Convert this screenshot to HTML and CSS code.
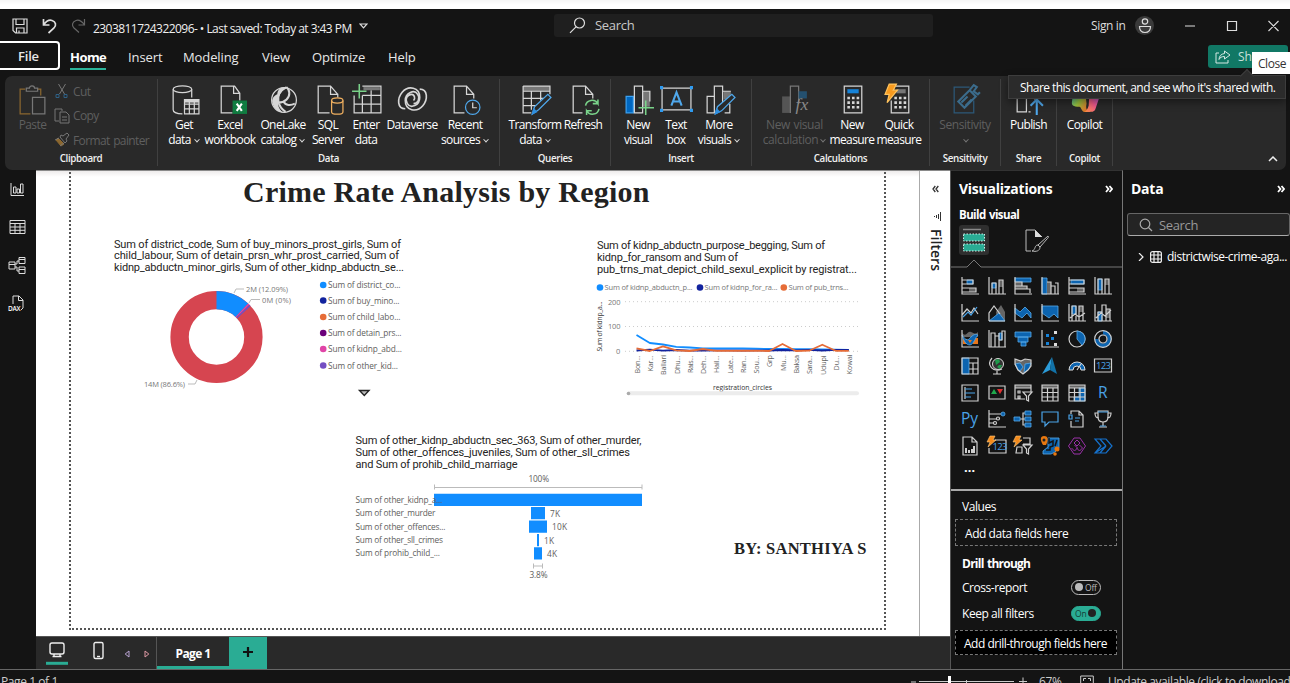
FILE: index.html
```html
<!DOCTYPE html>
<html lang="en">
<head>
<meta charset="utf-8">
<title>Power BI Desktop</title>
<link rel="stylesheet" href="styles.css">
</head>
<body>
<div class="strip"></div>
<header class="titlebar">
  <svg class="tb-save" width="16" height="16" viewBox="0 0 16 16"><path d="M1 1h14v14H3.500L1 12.500zM4 1v5.500h8V1M4.500 15v-5h7.500v5M7 12.500V15"/></svg>
  <svg class="tb-undo" width="15" height="16" viewBox="0 0 15 16"><path d="M1.500 1v6h6M1.500 7C4 3.500 7 1.500 10 2.500c4 1.300 4.500 5 2 7.500L6.500 15"/></svg>
  <svg class="tb-redo" width="15" height="16" viewBox="0 0 15 16"><path d="M13.500 1v6h-6M13.500 7C11 3.500 8 1.500 5 2.500c-4 1.300-4.500 5-2 7.500L8 14.500"/></svg>
  <span class="docname">2303811724322096- • Last saved: Today at 3:43 PM</span>
  <svg class="tb-tri" width="9" height="6" viewBox="0 0 9 6"><path d="M1 1h7L4.500 4.800z"/></svg>
  <div class="searchbox">
    <svg width="17" height="17" viewBox="0 0 17 17"><circle cx="10.500" cy="6" r="5"/><path d="M7 9.800L1 15.800"/></svg>
    <span>Search</span>
  </div>
  <span class="signin">Sign in</span>
  <span class="avatar"><svg width="14" height="16" viewBox="0 0 14 16"><circle cx="7" cy="3.500" r="2.700"/><path d="M1.500 8.500h11c0 4-2 6-5.500 6s-5.500-2-5.500-6z"/></svg></span>
  <svg class="winbtns" width="94" height="12" viewBox="0 0 94 12"><path d="M1 6h10M43.500 1.500h9v9h-9zM84.500 1l10 10M94.500 1l-10 10"/></svg>
</header>
<nav class="tabs">
  <span class="file">File</span>
  <span class="tab t-home">Home</span>
  <span class="tab t-insert">Insert</span>
  <span class="tab t-model">Modeling</span>
  <span class="tab t-view">View</span>
  <span class="tab t-opt">Optimize</span>
  <span class="tab t-help">Help</span>
  <span class="share"><svg width="16" height="14" viewBox="0 0 16 14"><path d="M4 3H1v10h12v-3M9.500 1l5.500 4-5.500 4V6.500C6.500 6.500 5 7.500 4 9.500 4.200 6 6 4 9.500 3.500z"/></svg><b>Share</b></span>
</nav>

<section class="ribbon">
  <div class="group g-clip">
    <div class="buttons">
      <div class="btn dim w-paste"><svg class="ic" viewBox="0 0 32 32"><path class="or2" d="M9 6H4v24h10M21 6h3v6"/><path class="g" d="M10 8V5h3c0-3 5-3 5 0h3v3zM16 14h12v16H16z"/></svg><span>Paste</span></div>
      <div class="clipcol">
        <div class="cliprow"><svg width="16" height="16" viewBox="0 0 16 16"><path class="g" d="M4.500 1l6 10M11.500 1l-6 10"/><path class="bl2" d="M2 11.500h3v3H2zM10 11.500h3v3h-3z"/></svg><span>Cut</span></div>
        <div class="cliprow"><svg width="16" height="16" viewBox="0 0 16 16"><path class="g" d="M5 13H1V1h7v2M6 4h6l3 3v8H6zM8 9h5M8 12h5"/></svg><span>Copy</span></div>
        <div class="cliprow"><svg width="16" height="16" viewBox="0 0 16 16"><path class="or2 ff" d="M2 8l5 6 3-2-6-6z"/><path class="g" d="M6 5l5 6 2-2-1-2 3-4-2-2-4 3-2-1zM1 8l4-2M6 14l4-3"/></svg><span>Format painter</span></div>
      </div>
    </div>
    <div class="glabel">Clipboard</div>
  </div>
  <div class="group g-data">
    <div class="buttons">
      <div class="btn w44"><svg class="ic" viewBox="0 0 32 32"><ellipse class="w" cx="14" cy="6" rx="9" ry="3.300"/><path class="w" d="M5 6v20c0 2 3 4 9 4M23 6v8"/><path class="w" d="M16 16h14v14H16zM16 20.500h14M16 25h14M20.700 18v12M25.500 18v12"/><path class="wf" d="M16 16h14v3H16z"/></svg><span>Get<br>data<i></i></span></div>
      <div class="btn w48"><svg class="ic" viewBox="0 0 32 32"><path class="w" d="M18 29H7V3h13l5 7v7M19 3v7h6"/><path fill="#107c41" d="M18 17h14v13H18z"/><path d="M22 20l5 7M27 20l-5 7" stroke="#fff" stroke-width="2"/></svg><span>Excel<br>workbook</span></div>
      <div class="btn w58"><svg class="ic" viewBox="0 0 32 32"><circle class="w" cx="16.500" cy="16.500" r="12"/><path class="wf" d="M19 4c-6-1-9 3-9 7-3 1-5 4-5 7 1 7 6 10 11 11-4-3-6-7-5-11 0-6 2-9 8-14z"/><path class="w" stroke-width="2" d="M19 4c-6 3-9 8-8 14 1 5 4 8 7 10M19 4c3 3 4 8 0 12-2 2-5 3-8 3M16 18c2 4 7 4 11 2"/></svg><span>OneLake<br>catalog<i></i></span></div>
      <div class="btn w32"><svg class="ic" viewBox="0 0 32 32"><path class="w" d="M17 29H6V3h12l7 8M18 3v8h7v3"/><path class="or" d="M19 17v11c0 3 11 3 11 0V17"/><ellipse class="or" cx="24.500" cy="17" rx="5.500" ry="2.500"/></svg><span>SQL<br>Server</span></div>
      <div class="btn w44"><svg class="ic" viewBox="0 0 32 32"><path class="w" d="M4 12v17h26V3H12M4 20.500h26M12 12v17M20.500 7v22M12 12h18"/><path fill="#777" d="M13 4h16v3H13z"/><path class="gr" d="M9 1v14M2 8h14"/></svg><span>Enter<br>data</span></div>
      <div class="btn w48"><svg class="ic" viewBox="0 0 32 32"><path class="w" stroke-width="1.600" d="M9 25C1 25 1 15 6 9c6-7 17-5 17 5 0 8-9 11-12 6-3-4 0-9 4-9 3 0 4 4 2 6"/><path class="w" stroke-width="1.600" d="M23 6c8 0 8 10 3 16-6 7-17 5-17-5 0-8 9-11 12-6 3 4 0 9-4 9"/></svg><span>Dataverse</span></div>
      <div class="btn w58"><svg class="ic" viewBox="0 0 32 32"><path class="w" d="M15 29H5V3h12l7 8v4M17 3v8h7"/><circle class="bl" cx="23" cy="23.500" r="7"/><path class="w" d="M23 19v5h4"/></svg><span>Recent<br>sources<i></i></span></div>
    </div>
    <div class="glabel">Data</div>
  </div>
  <div class="group g-query">
    <div class="buttons">
      <div class="btn w52"><svg class="ic" viewBox="0 0 32 32"><path fill="#777" d="M4 3h26v5H4z"/><path class="w" d="M4 3h26v8M12 29H4V3M4 8h26M4 15h20M4 22h13M12 8v18M21 8v9"/><path class="bl" d="M13 30l2-7L28 11l3 3-12 12z"/><path fill="#2f8fe0" d="M12 31l2-7 4 4z"/></svg><span>Transform<br>data<i></i></span></div>
      <div class="btn w44"><svg class="ic" viewBox="0 0 32 32"><path class="w" d="M15 29H6V3h12l7 8v4M18 3v8h7"/><path class="gr" d="M18 22c1-6 9-7 12-2v-4M30 20h-5M31 25c-1 6-9 7-12 2v4M19 27h5"/></svg><span>Refresh</span></div>
    </div>
    <div class="glabel">Queries</div>
  </div>
  <div class="group g-insert">
    <div class="buttons">
      <div class="btn w36"><svg class="ic" viewBox="0 0 32 32"><path fill="#0067c0" stroke="#3aa0f0" d="M4 13h7v16H4z"/><path fill="#777" d="M20 8h7v15h-7z"/><path class="w" d="M12 29V3h8v26zM20 8h7v10"/><path class="gr" d="M23 17v14M16 24h15"/></svg><span>New<br>visual</span></div>
      <div class="btn w40"><svg class="ic" viewBox="0 0 32 32"><path class="w" d="M2 5h28v21H2z"/><path fill="#2f9bf0" d="M0 3h3v3H0zM29 3h3v3h-3zM0 25h3v3H0zM29 25h3v3h-3z"/><path class="bl" stroke-width="2" d="M11 22l5-13 5 13M13 18h6"/></svg><span>Text<br>box</span></div>
      <div class="btn w46"><svg class="ic" viewBox="0 0 32 32"><path fill="#777" d="M20 8h7v8h-7z"/><path class="w" d="M4 13h7v16H4zM11 29V3h8v18M19 8h8M26 20v9h-5"/><path class="bl" d="M12 30l2-7L28 11l3 3-13 13z"/><path fill="#2f8fe0" d="M11 31l2-7 4 4z"/></svg><span>More<br>visuals<i></i></span></div>
    </div>
    <div class="glabel">Insert</div>
  </div>
  <div class="group g-calc">
    <div class="buttons">
      <div class="btn dim w67"><svg class="ic" viewBox="0 0 32 32"><path fill="#555" d="M4 13h8v16H4z"/><path class="g" d="M12 29V3h8v17"/><path fill="#24506f" d="M20 8h8v7h-8z"/><text x="17" y="26" class="fx">fx</text></svg><span>New visual<br>calculation<i></i></span></div>
      <div class="btn w48"><svg class="ic" viewBox="0 0 32 32"><path class="w" d="M8 3h17v26H8z"/><path fill="#1683d9" d="M11 6h11v4H11z"/><path class="dots" d="M11 14.500h12M11 19h12M11 23.500h12"/></svg><span>New<br>measure</span></div>
      <div class="btn w46"><svg class="ic" viewBox="0 0 32 32"><path class="w" d="M12 3h13v26H8V17"/><path fill="#777" d="M13 6h9v4h-9z"/><path class="dots" d="M11 14.500h12M11 19h12M11 23.500h12"/><path fill="#f79a1e" stroke="#ffc35d" d="M6 1h7l-3 6h4L4 19l2-8H2z"/></svg><span>Quick<br>measure</span></div>
    </div>
    <div class="glabel">Calculations</div>
  </div>
  <div class="group g-sens">
    <div class="buttons">
      <div class="btn dim"><svg class="ic" viewBox="0 0 32 32"><path d="M20 4H5v25h19V17" fill="none" stroke="#2c5878"/><path d="M9 18l11-11 6 6-11 11zM12 19l6-6M16 22l6-6M20 7l4-5 3 2-3 4 4 3 2-2" fill="none" stroke="#3b6c8c" stroke-width="2"/></svg><span>Sensitivity<br><i class="solo"></i></span></div>
    </div>
    <div class="glabel">Sensitivity</div>
  </div>
  <div class="group g-share">
    <div class="buttons">
      <div class="btn"><svg class="ic" viewBox="0 0 32 32"><path class="w" d="M5 15h9v13H5zM14 28V5h8v11M16 28h2"/><path class="bl" stroke-width="2" d="M24 31V17M18 22l6-6 6 6"/></svg><span>Publish</span></div>
    </div>
    <div class="glabel">Share</div>
  </div>
  <div class="group g-cop">
    <div class="buttons">
      <div class="btn"><svg class="ic" viewBox="0 0 32 32"><defs><linearGradient id="ca" x1="0" y1="0" x2="1" y2="1"><stop offset="0" stop-color="#20b7d8"/><stop offset=".5" stop-color="#9bc53d"/><stop offset="1" stop-color="#f45020"/></linearGradient><linearGradient id="cb" x1="1" y1="0" x2="0" y2="1"><stop offset="0" stop-color="#a45cf0"/><stop offset=".5" stop-color="#f0598a"/><stop offset="1" stop-color="#f89040"/></linearGradient></defs><path fill="url(#ca)" d="M6 3h10l2 17c-1 4 0 7 3 8h-5c-3 0-3-5-5-5-6 0-8-1-7-6z"/><path fill="url(#cb)" d="M21 8h5c4 0 5 3 4 7l-3 9c-1 4-3 4-6 4h-5c2-1 3-3 4-6z"/></svg><span>Copilot</span></div>
    </div>
    <div class="glabel">Copilot</div>
  </div>
  <svg class="collapse" width="10" height="6" viewBox="0 0 10 6"><path d="M1 5l4-4 4 4"/></svg>
</section>

<main class="main">
  <aside class="rail">
    <svg width="17" height="17" viewBox="0 0 17 17"><path d="M2 2v12.500h13M4.500 6h2.500v6H4.500zM8 8h2.500v4H8zM11.500 3H14v9h-2.500z"/></svg>
    <svg width="17" height="17" viewBox="0 0 17 17"><path d="M1 1.500h15v13H1zM1 4.500h15M1 8h15M1 11.300h15M6 4.500v10M11 4.500v10"/></svg>
    <svg width="18" height="17" viewBox="0 0 18 17"><path d="M1 5h6v7H1zM1 7.500h6M11 .5h6v6h-6zM11 2.500h6M11 10h6v6.500h-6zM11 12.500h6M7 7h2V4h2M7 10h2v4h2"/></svg>
    <svg width="19" height="17" viewBox="0 0 19 17"><path d="M5 9V1h6l4 4v8l-2 2M10.500 1v4.500H15"/><text x="0" y="15.500">DAX</text></svg>
  </aside>
  <div class="center">
    <div class="work">
      <div class="canvas">
        <div class="page"></div>
        <h1>Crime Rate Analysis by Region</h1>

        <svg class="vis v-donut" width="310" height="170" viewBox="108 233 310 170">
          <g class="vt"><text x="114" y="247.500" textLength="287">Sum of district_code, Sum of buy_minors_prost_girls, Sum of</text><text x="114" y="259.300" textLength="285">child_labour, Sum of detain_prsn_whr_prost_carried, Sum of</text><text x="114" y="271.300" textLength="290">kidnp_abductn_minor_girls, Sum of other_kidnp_abductn_se...</text></g>
          <g fill="none" stroke-width="18.400" transform="rotate(-90 216.500 337)">
            <circle cx="216.500" cy="337" r="36.900" stroke="#d64550"/>
            <circle cx="216.500" cy="337" r="36.900" stroke="#118dff" stroke-dasharray="28 300"/>
            <circle cx="216.500" cy="337" r="36.900" stroke="#e044a7" stroke-dasharray="0 28 1.300 300"/>
            <circle cx="216.500" cy="337" r="36.900" stroke="#744ec2" stroke-dasharray="0 29.300 1.500 300"/>
          </g>
          <path class="lead" d="M234 293l2-4h8M249 303l2-3.500h9M188 384h7l2-4"/>
          <g class="dl"><text x="246" y="292" textLength="42">2M (12.09%)</text><text x="262" y="303" textLength="29">0M (0%)</text><text x="144" y="387" textLength="41">14M (86.6%)</text></g>
          <g><circle cx="323.200" cy="285" r="3.300" fill="#118dff"/><circle cx="323.200" cy="300.500" r="3.300" fill="#12239e"/><circle cx="323.200" cy="317" r="3.300" fill="#e66c37"/><circle cx="323.200" cy="333" r="3.300" fill="#6b007b"/><circle cx="323.200" cy="349" r="3.300" fill="#e044a7"/><circle cx="323.200" cy="365.500" r="3.300" fill="#744ec2"/></g>
          <g class="lg"><text x="328" y="288" textLength="72.500">Sum of district_co...</text><text x="328" y="303.500" textLength="71.500">Sum of buy_mino...</text><text x="328" y="320.300" textLength="72.500">Sum of child_labo...</text><text x="328" y="335.700" textLength="73.500">Sum of detain_prs...</text><text x="328" y="352" textLength="74">Sum of kidnp_abd...</text><text x="328" y="368.800" textLength="70">Sum of other_kid...</text></g>
          <path d="M359.500 390.500h9.500l-4.700 5z" fill="#bbb" stroke="#222" stroke-width="1.400"/>
        </svg>

        <svg class="vis v-line" width="280" height="165" viewBox="590 235 280 165">
          <g class="vt"><text x="597" y="249.300" textLength="228">Sum of kidnp_abductn_purpose_begging, Sum of</text><text x="597" y="261" textLength="141">kidnp_for_ransom and Sum of</text><text x="597" y="273" textLength="260">pub_trns_mat_depict_child_sexul_explicit by registrat...</text></g>
          <circle cx="600" cy="287.500" r="3.300" fill="#118dff"/><circle cx="700" cy="287.500" r="3.300" fill="#12239e"/><circle cx="783.800" cy="287.500" r="3.300" fill="#e66c37"/>
          <g class="dl"><text x="604.500" y="290.300" textLength="88">Sum of kidnp_abductn_p...</text><text x="704.500" y="290.300" textLength="73">Sum of kidnp_for_ra...</text><text x="788.500" y="290.300" textLength="60">Sum of pub_trns...</text></g>
          <g class="ax"><text x="608" y="304.500" textLength="12.500">200</text><text x="608" y="329.300" textLength="12.500">100</text><text x="616" y="354">0</text></g>
          <path d="M625 301.700h234M625 326.500h234M625 351.300h234" stroke="#ccc" stroke-dasharray="1 3"/>
          <text class="yl" transform="translate(602 351.500) rotate(-90)" textLength="50">Sum of kidnp_a...</text>
          <g fill="none" stroke-width="1.800" stroke-linejoin="round">
            <polyline stroke="#118dff" points="636.500,335 649.800,343 663,344.500 676.300,346.800 689.600,347.500 702.900,348.300 716.100,348.300 729.400,348.300 742.700,348.300 755.900,348.600 769.200,349 782.500,349 795.800,349.200 809,349.200 822.300,349.300 835.600,349.600 848.800,349.900"/>
            <polyline stroke="#12239e" points="636.500,350.500 649.800,349.700 663,350.600 676.300,350 689.600,350.600 702.900,350.500 716.100,350.300 729.400,350.300 742.700,350.500 755.900,350.400 769.200,350.500 782.500,350 795.800,350.300 809,349.900 822.300,350.500 835.600,349.800 848.800,350"/>
            <polyline stroke="#e66c37" points="636.500,348.400 649.800,351 663,346.400 676.300,350.400 689.600,351 702.900,349 716.100,350.800 729.400,350.800 742.700,350.800 755.900,350.800 769.200,351 782.500,344 795.800,351 809,350.700 822.300,344.700 835.600,350.800 848.800,350.900"/>
          </g>
          <g class="xl">
            <text transform="translate(639.700 373.500) rotate(-90)" textLength="18">Bon...</text><text transform="translate(653 371.500) rotate(-90)" textLength="16">Kar...</text><text transform="translate(666.200 375) rotate(-90)" textLength="20">Ballari</text><text transform="translate(679.500 374) rotate(-90)" textLength="18.500">Dhu...</text><text transform="translate(692.800 373) rotate(-90)" textLength="17.500">Rais...</text><text transform="translate(706.100 374) rotate(-90)" textLength="18.500">Deh...</text><text transform="translate(719.300 373) rotate(-90)" textLength="17.500">Hail...</text><text transform="translate(732.600 373.500) rotate(-90)" textLength="18">Late...</text><text transform="translate(745.900 373) rotate(-90)" textLength="17.500">Ran...</text><text transform="translate(759.100 373.500) rotate(-90)" textLength="18">Sou...</text><text transform="translate(772.400 367) rotate(-90)" textLength="12">Grp</text><text transform="translate(785.700 371) rotate(-90)" textLength="16">Mu...</text><text transform="translate(799 373.500) rotate(-90)" textLength="18.500">Baksa</text><text transform="translate(812.200 374) rotate(-90)" textLength="18.500">Sara...</text><text transform="translate(825.500 375) rotate(-90)" textLength="19.500">Udupi</text><text transform="translate(838.800 370.500) rotate(-90)" textLength="15">Du...</text><text transform="translate(852 374.500) rotate(-90)" textLength="20">Kowai</text>
          </g>
          <text class="xt" x="713" y="390" textLength="59">registration_circles</text>
          <path d="M629 393.300h228" stroke="#ececec" stroke-width="4" stroke-linecap="round"/><circle cx="628.500" cy="393.500" r="1.800" fill="#aaa"/>
        </svg>

        <svg class="vis v-funnel" width="300" height="155" viewBox="350 430 300 155">
          <g class="vt"><text x="355.500" y="444.300" textLength="286">Sum of other_kidnp_abductn_sec_363, Sum of other_murder,</text><text x="355.500" y="456" textLength="274.500">Sum of other_offences_juveniles, Sum of other_sll_crimes</text><text x="355.500" y="468" textLength="162">and Sum of prohib_child_marriage</text></g>
          <path d="M434.500 484.500v5M434.500 487.500h207.500M642 484.500v5M533.500 563.500v5M533.500 566h9M542.500 563.500v5" stroke="#bbb" fill="none"/>
          <path fill="#118dff" d="M434 493.700h208v12.200H434zM531 507h14v12.200h-14zM529 520.500h18v12.200h-18zM537 534h2v12.200h-2zM534 547.300h8v12.200h-8z"/>
          <g class="fl"><text x="528.500" y="482" textLength="20.500">100%</text><text x="355.500" y="503" textLength="87">Sum of other_kidnp_a...</text><text x="355.500" y="516.300" textLength="80">Sum of other_murder</text><text x="355.500" y="529.500" textLength="90">Sum of other_offences...</text><text x="355.500" y="543" textLength="87.500">Sum of other_sll_crimes</text><text x="355.500" y="556.300" textLength="84.500">Sum of prohib_child_...</text><text x="550" y="516.500" textLength="10">7K</text><text x="552" y="530.300" textLength="15">10K</text><text x="544" y="543.800" textLength="10">1K</text><text x="547" y="557" textLength="10">4K</text><text x="529.500" y="578" textLength="18">3.8%</text></g>
        </svg>
        <div class="byline">BY: SANTHIYA S</div>
      </div>
      <div class="filters">
        <svg width="7" height="8" viewBox="0 0 7 8"><path d="M3.300 1L1 4l2.300 3M6.300 1L4 4l2.300 3"/></svg>
        <svg class="f-ic" width="9" height="9" viewBox="0 0 9 9"><path d="M7.500 0v9M5.500 2v5M3.500 3v3M1.500 4v1"/></svg>
        <span>Filters</span>
      </div>
    </div>
    <div class="pagebar">
      <div class="views">
        <svg class="pb-desk" width="24" height="26" viewBox="0 0 24 26"><rect x="5" y="3" width="14" height="11" rx="2"/><path d="M9 14v2.500M15 14v2.500M7.500 16.500h9"/><path class="uline" d="M1 23.300h22"/></svg>
        <svg width="12" height="19" viewBox="0 0 12 19"><rect x="2" y="1.500" width="9" height="16" rx="1.500"/><path d="M5 15.500h3"/></svg>
        <svg class="nav1" width="6" height="8" viewBox="0 0 6 8"><path d="M5 1v6L1.200 4z"/></svg>
        <svg class="nav2" width="6" height="8" viewBox="0 0 6 8"><path d="M1 1v6l3.800-3z"/></svg>
      </div>
      <div class="ptab">Page 1</div>
      <div class="padd"><svg width="10" height="10" viewBox="0 0 10 10"><path d="M5 0v10M0 5h10"/></svg></div>
    </div>
  </div>

  <aside class="viz">
    <div class="vhead"><b>Visualizations</b><svg width="8" height="8" viewBox="0 0 8 8"><path d="M1 1l2.500 3L1 7M4.500 1L7 4 4.500 7"/></svg></div>
    <div class="build">Build visual</div>
    <div class="modes">
      <span class="mode on"><svg width="24" height="24" viewBox="0 0 24 24"><path stroke="#888" stroke-width="1.500" d="M1 1.500h18"/><path class="teal" d="M1.500 6h21v7h-21zM1.500 16h21v7h-21z"/></svg></span>
      <span class="mode"><svg width="26" height="25" viewBox="0 0 26 25"><path d="M7 23H2V2h9l7 7" stroke="#bbb" fill="none"/><path fill="#ddd" d="M11 2v7h7z"/><path d="M24 8c1 1 0 2-1 3l-7 8-2-2zM14 17c-4 0-2 5-6 6 4 1 8 0 8-4" stroke="#bbb" fill="#141414"/></svg></span>
    </div>
    <svg class="notch" width="171" height="9" viewBox="0 0 171 9"><path d="M0 8H16l7-7 7 7h141"/></svg>
    <div class="gallery">
      <svg viewBox="0 0 18 18"><path class="b" d="M6 3h6v4H6z"/><path class="gf" d="M8 11h7v4H8z"/><path class="k" d="M1 0v17h17M1 3h11v4H1M1 11h14v4H1"/></svg>
      <svg viewBox="0 0 18 18"><path class="b" d="M4 6h4v5H4z"/><path class="gf" d="M11 3h4v7h-4z"/><path class="k" d="M1 0v17h17M4 17V6h4v11M11 17V3h4v14"/></svg>
      <svg viewBox="0 0 18 18"><path class="b" d="M1 1h16v4H1z"/><path class="gf" d="M1 5h7v4H1zM1 9h12v3H1z"/><path class="k" d="M1 0v17h17M1 5h7v4H1M1 9h12v3H1M1 12h15v4"/></svg>
      <svg viewBox="0 0 18 18"><path class="b" d="M1 1h5v16H1z"/><path class="gf" d="M6 5h4v12H6z"/><path class="k" d="M1 0v17h17M6 5h4v12M10 9h4v8M14 6h3v11"/></svg>
      <svg viewBox="0 0 18 18"><path class="b" d="M3 3h13v4H3z"/><path class="gf" d="M9 11h7v4H9z"/><path class="k" d="M1 0v17h17M1 3h15v4H1M1 11h15v4H1"/></svg>
      <svg viewBox="0 0 18 18"><path class="b" d="M4 2h4v11H4z"/><path class="gf" d="M11 2h4v6h-4z"/><path class="k" d="M1 0v17h17M4 17V2h4v15M11 17V2h4v15"/></svg>

      <svg viewBox="0 0 18 18"><path class="k" d="M1 0v17h17M1 11l5-6 4 4 3-5 4 6"/><path class="bs" d="M2 13l5-5 3 3 6-8"/></svg>
      <svg viewBox="0 0 18 18"><path class="gf" d="M8 8l5-7 4 7v9H9z"/><path class="b" d="M1 17l5-4 5-4 6 8z"/><path class="k" d="M1 17V9l5-7 6 8M1 17h16"/></svg>
      <svg viewBox="0 0 18 18"><path class="b" d="M1 4l5 4 5-5 6 6v5l-4-5-5 5-7-5z"/><path class="k" d="M1 0v17h17"/></svg>
      <svg viewBox="0 0 18 18"><path class="b" d="M1 2h16v12l-4-4-5 4-7-5z"/><path class="k" d="M1 0v17h17"/></svg>
      <svg viewBox="0 0 18 18"><path class="b" d="M4 2h4v8H4z"/><path class="gf" d="M11 2h4v6h-4z"/><path class="k" d="M1 0v17h17M4 17V2h4v15M11 17V2h4v15M2 14l5-4 4 3 6-4"/></svg>
      <svg viewBox="0 0 18 18"><path class="b" d="M4 8h4v9H4z"/><path class="gf" d="M12 5h4v9h-4z"/><path class="k" d="M1 0v17h17M4 17V8h4M8 17V1h4v16M12 5h4v12M2 14l5-5 4 3 6-6"/></svg>

      <svg viewBox="0 0 18 18"><path class="gf" d="M1 3c5 5 5-3 9-1 3 1 4 3 7 0v5H1z"/><path fill="#e8761a" d="M2 9h4v5H2zM12 8h5v6h-5z"/><path class="b" d="M1 5c4 6 6 6 9 2 3-3 5-3 7-2-3 3-4 9-8 10-4 0-6-4-8-10z"/><path fill="#e8761a" d="M7 10h4l-2 3z"/><path class="k" d="M1 0v17h17"/></svg>
      <svg viewBox="0 0 18 18"><path class="b" d="M11 3h3v7h-3z"/><path class="k" d="M1 0v17h17M3 17V3h4v14M7 6h4v11M11 3v7h3V1h3v16"/></svg>
      <svg viewBox="0 0 18 18"><path class="b" d="M1 2h16v5H1zM4 7h10v5H4zM7 12h5v4H7z"/></svg>
      <svg viewBox="0 0 18 18"><path class="k" d="M1 0v17h17"/><path fill="#1683d9" d="M5 4h3v3H5zM10 7h3v3h-3zM5 12h3v3H5z"/><path fill="#ddd" d="M13 1h3v3h-3zM13 13h3v3h-3z"/></svg>
      <svg viewBox="0 0 18 18"><circle class="k" cx="9" cy="9" r="8"/><path class="b" d="M9 1v8l5 6c5-4 4-13-5-14z"/></svg>
      <svg viewBox="0 0 18 18"><circle cx="9" cy="9" r="6.500" fill="none" stroke="#0c64b0" stroke-width="4"/><path fill="none" stroke="#141414" stroke-width="4" d="M2.500 9A6.500 6.500 0 0 1 9 2.500"/><circle class="k" cx="9" cy="9" r="8.300"/><circle class="k" cx="9" cy="9" r="4"/></svg>

      <svg viewBox="0 0 18 18"><path class="b" d="M1 1h7v16H1z"/><path class="k" d="M1 1h16v16H1zM8 6h9M8 12h9M12 6v11"/></svg>
      <svg viewBox="0 0 18 18"><circle cx="10" cy="7" r="5.500" fill="#333" stroke="#ddd"/><path fill="#1e9a4a" d="M7 3l4-1 1 3-4 3zM11 8h3l-2 4-3-2z"/><path class="k" d="M4 1c-6 7 1 15 10 11M9 14v3M5 17h8"/></svg>
      <svg viewBox="0 0 18 18"><path class="gf" d="M1 2l6 2 4-2 6 1v6l-3 2-5 6-5-4-3-6z"/><path class="b" d="M1 7l5-1 3 4-3 4-2-1zM11 7l6-1-2 6-5 4z"/><path class="k" d="M1 2l6 2 4-2 6 1v6l-3 4-5 4-5-4-3-6z"/></svg>
      <svg viewBox="0 0 18 18"><path fill="#2b9bd8" d="M11 0L1 17l8-4z"/><path fill="#1272a8" d="M11 0l5 17-7-4z"/></svg>
      <svg viewBox="0 0 18 18"><path fill="#0c64b0" stroke="#ddd" d="M1 13a8 8 0 0 1 16 0h-4a4 4 0 0 0-8 0z"/><path class="k" d="M9 13l4-6"/></svg>
      <svg viewBox="0 0 18 18"><path class="k" d="M0.500 2h17v13H.5z"/><text x="2" y="12.300">123</text></svg>

      <svg viewBox="0 0 18 18"><path class="k" d="M1 1h16v16H1zM4 3v12"/><path class="bs" d="M4 5h7M4 9h10M4 13h6"/></svg>
      <svg viewBox="0 0 18 18"><path class="k" d="M1 2h16v13H1z"/><path fill="#20a84c" d="M3 10l3-5 3 5z"/><path fill="#e03030" d="M9 5h6l-3 5z"/></svg>
      <svg viewBox="0 0 18 18"><path class="gf" d="M1 1h16v3H1z"/><path class="k" d="M11 15H1V1h16v7M1 4h16M4 7h2v2H4zM4 12h2v2H4zM9 8h9l-3.500 4v5l-2-1v-4z"/></svg>
      <svg viewBox="0 0 18 18"><path class="gf" d="M1 1h16v3H1z"/><path class="k" d="M1 1h16v16H1zM1 4h16M1 8.500h16M1 13h16M6.500 4v13M12 4v13"/></svg>
      <svg viewBox="0 0 18 18"><path class="gf" d="M1 1h16v3H1z"/><path class="b" d="M11 4h6v13H6v-4h5z"/><path class="k" d="M1 1h16v16H1zM1 4h16M1 8.500h16M1 13h16M6.500 4v13M12 4v13"/></svg>
      <svg viewBox="0 0 18 18"><text x="4" y="14" class="big">R</text></svg>

      <svg viewBox="0 0 18 18"><text x="0" y="14" class="big py">Py</text></svg>
      <svg viewBox="0 0 18 18"><path class="k" d="M1 0v17h17M1 4h12M1 9h8M1 13h5"/><circle cx="15" cy="4" r="2" class="b"/><circle cx="10" cy="8.500" r="1.500" class="k"/><circle cx="7" cy="13" r="1.500" class="k"/></svg>
      <svg viewBox="0 0 18 18"><path class="k" d="M6 9h6M9 9V3h3M9 9v6h3"/><path class="b" d="M0 7h6v4H0zM11 1h6v4h-6zM11 7h6v4h-6zM11 13h6v4h-6z"/></svg>
      <svg viewBox="0 0 18 18"><path class="bs" d="M1 2h16v10H8l-4 4v-4H1z"/></svg>
      <svg viewBox="0 0 18 18"><path class="k" d="M3 4V1h8l4 4v12H3v-6M11 1v4h4"/><path class="bs" d="M1 5h3v4H1zM7 8h5M7 11h4"/></svg>
      <svg viewBox="0 0 18 18"><path class="k" d="M4 1h10v6c0 3-2 5-5 5s-5-2-5-5zM4 3H1c0 4 1 5 4 5M14 3h3c0 4-1 5-4 5M9 12v4M5 17h8"/><path class="bs" d="M4 2h10M6 16h6"/></svg>

      <svg viewBox="0 0 18 18"><path class="k" d="M2 0h9l5 5v13H2zM11 0v5h5"/><path d="M5 16v-5M8 16v-3M11 16v-4M13 16V9" stroke="#fff" stroke-width="1.600"/></svg>
      <svg viewBox="0 0 18 18"><path class="k" d="M7 3h11v13H1v-5"/><text x="4.500" y="13">123</text><path class="bolt" d="M2-1h5L5 3h3L0 10l2-5h-3z"/></svg>
      <svg viewBox="0 0 18 18"><path class="k" d="M9 1h7v6H9M3 10h5v6H2zM9 8h9l-3.500 4v5l-2-1v-4z"/><path class="bolt" d="M2-1h5L5 3h3L0 10l2-5h-3z"/></svg>
      <svg viewBox="0 0 18 18"><path class="b" d="M7 1h11v10l-4 4-4 2H2v-3l5-4z"/><path d="M8 1v5l4-2v5l-3 1v3H5M16 3l-2 6" stroke="#141414" stroke-width="1.500" fill="none"/><path fill="#e87810" d="M3-1c5 0 4 5 2 9H2C-1 3-1-1 3-1z"/><circle cx="3" cy="3" r="1.500" fill="#222"/><circle cx="16" cy="12" r="2.500" fill="#e87810"/><circle cx="14" cy="17" r="1.800" fill="#e87810"/></svg>
      <svg viewBox="0 0 18 18"><path fill="none" stroke="#9a30a8" d="M6 1h6l5.500 8-5.500 8H6L.5 9zM9 3l3 3-3 3-3-3zM6.500 8l3 3-3 3-3-3M11.500 8l3 3-3 3-3-3"/></svg>
      <svg viewBox="0 0 18 18"><path fill="none" stroke="#1571cc" stroke-width="1.200" d="M1 2h11l6 7-6 7H1l6-7zM6 2l6 7M1 16L12 9M6 16l6-7"/></svg>
    </div>
    <div class="more">…</div>
    <div class="wells">
      <div class="wlabel">Values</div>
      <div class="well">Add data fields here</div>
      <div class="drill">Drill through</div>
      <div class="trow"><span>Cross-report</span><span class="toggle"><em></em>Off</span></div>
      <div class="trow t2"><span>Keep all filters</span><span class="toggle on">On<em></em></span></div>
      <div class="well black">Add drill-through fields here</div>
    </div>
  </aside>
  <aside class="data">
    <div class="vhead"><b>Data</b><svg width="8" height="8" viewBox="0 0 8 8"><path d="M1 1l2.500 3L1 7M4.500 1L7 4 4.500 7"/></svg></div>
    <div class="dsearch"><svg width="14" height="14" viewBox="0 0 14 14"><circle cx="6" cy="6" r="4.800"/><path d="M9.500 9.500L13 13"/></svg><span>Search</span></div>
    <div class="ditem"><svg width="6" height="8" viewBox="0 0 6 8"><path d="M1 0l4 4-4 4"/></svg><svg class="tbl" width="12" height="12" viewBox="0 0 12 12"><rect x=".6" y=".6" width="10.800" height="10.800" rx="2"/><path d="M.6 4h10.800M.6 8h10.800M4 .6v10.800M8 .6v10.800"/></svg><span>districtwise-crime-aga...</span></div>
  </aside>
</main>

<footer class="status">
  <span class="pg">Page 1 of 1</span>
  <svg class="slider" width="120" height="12" viewBox="0 0 120 12"><path d="M1 6h5M9 5.500h95M56.500 4v4M109 5.500h8M113 1.500v8" stroke="#ccc" fill="none"/><path fill="#fff" d="M38 0h3v10h-3z"/></svg>
  <span class="pct">67%</span>
  <svg class="fit" width="14" height="12" viewBox="0 0 14 12"><path d="M.7 1h12.600v11H.7zM3.500 6V3.500H6M8 3.500h2.500V6"/></svg>
  <span class="upd">Update available (click to download)</span>
</footer>

<div class="tip">Share this document, and see who it's shared with.</div>
<div class="closetip">Close</div>
</body>
</html>
```
FILE: styles.css
```css
* { box-sizing: border-box; }
body { margin: 0; width: 1290px; height: 683px; overflow: hidden; background: #141414; color: #fff; font-family: "Open Sans", "Noto Sans", sans-serif; font-size: 12px; display: flex; flex-direction: column; position: relative; white-space: nowrap; }
svg { flex: none; display: block; }
.strip { height: 9px; flex: none; background: linear-gradient(#f5f5f5, #fff 5px); }

.titlebar { height: 33px; flex: none; display: flex; align-items: center; }
.titlebar svg { fill: none; stroke: #ddd; stroke-width: 1.2; }
.tb-save { margin-left: 12px; }
.tb-undo { margin-left: 14px; }
.titlebar .tb-undo { stroke-width: 1.7; }
.tb-redo { margin-left: 14px; }
.titlebar .tb-redo { stroke: #666; }
.docname { margin-left: 7px; margin-top: 6px; width: 260px; letter-spacing: -.55px; color: #f0f0f0; }
.tb-tri { margin-left: 6px; }
.searchbox { margin-left: 186px; width: 379px; height: 23px; background: #1f1f1f; border-radius: 3px; display: flex; align-items: center; padding-left: 15px; color: #c8c8c8; font-size: 13px; letter-spacing: -.3px; }
.searchbox span { margin: -2px 0 0 9px; }
.signin { margin-left: 158px; width: 36px; letter-spacing: -.35px; color: #ddd; }
.avatar { margin-left: 8px; width: 19px; height: 19px; border-radius: 50%; background: #3a3a3a; display: flex; align-items: center; justify-content: center; }
.winbtns { margin-left: 30px; overflow: visible; }

.tabs { height: 34px; flex: none; display: flex; align-items: flex-start; font-size: 13px; color: #e8e8e8; line-height: 30px; }
.file { width: 60px; height: 29px; border: 2px solid #fff; border-left: 0; border-radius: 0 4px 4px 0; line-height: 27px; padding-left: 18px; font-weight: 600; margin-top: -1px; letter-spacing: -.2px; }
.tab { letter-spacing: -.1px; }
.t-home { margin-left: 10px; width: 36px; height: 28px; font-weight: 700; color: #fff; border-bottom: 2px solid #2bb39a; letter-spacing: -.55px; }
.t-insert { margin-left: 22px; width: 33px; }
.t-model { margin-left: 22px; width: 57px; }
.t-view { margin-left: 22px; width: 28px; }
.t-opt { margin-left: 22px; width: 54px; letter-spacing: -.2px; }
.t-help { margin-left: 22px; width: 27px; }
.share { margin-left: auto; margin-right: 2px; margin-top: 3px; width: 80px; height: 23px; border-radius: 3px; background: #117865; display: flex; align-items: center; padding-left: 7px; gap: 7px; line-height: 22px; color: #c9e0db; }
.share svg { fill: none; stroke: #d5e8e4; }
.share b { font-weight: 400; font-size: 12px; width: 14px; overflow: hidden; }

.ribbon { margin-left: 5px; width: 1281px; height: 94px; flex: none; background: #292929; border-radius: 7px; display: flex; padding-top: 3px; }
.group { height: 87px; border-right: 1px solid #404040; display: flex; flex-direction: column; }
.buttons { height: 75px; display: flex; align-items: flex-start; }
.glabel { text-align: center; font-size: 9.800px; line-height: 12px; letter-spacing: -.35px; margin-top: -1px; font-weight: 600; color: #f0f0f0; }
.g-clip { width: 153px; } .g-data { width: 342px; } .g-query { width: 111px; } .g-insert { width: 141px; } .g-calc { width: 178px; } .g-sens { width: 71px; } .g-share { width: 56px; } .g-cop { width: 56px; }
.g-data .buttons { padding-left: 4px; } .g-query .buttons { padding-left: 9px; } .g-insert .buttons { padding-left: 9px; } .g-calc .buttons { padding-left: 9px; }
.g-sens .buttons, .g-share .buttons, .g-cop .buttons { justify-content: center; }
.btn { display: flex; flex-direction: column; align-items: center; padding-top: 4px; flex: none; }
.btn span { margin-top: 1px; line-height: 15px; text-align: center; letter-spacing: -.6px; color: #fff; word-spacing: 1px; }
.btn.dim span, .cliprow { color: #5f5f5f; }
.g-calc .dim span, .g-sens .dim span { letter-spacing: -.42px; }
.btn i { display: inline-block; width: 4px; height: 4px; border: solid #ddd; border-width: 0 1px 1px 0; transform: rotate(45deg) translate(-1px, -1px); margin: 0 1px 1px 4px; }
.btn.dim i { border-color: #777; margin-left: 3px; }
.w44 { width: 44px; } .w48 { width: 48px; } .w58 { width: 58px; } .w32 { width: 32px; } .w52 { width: 52px; } .w36 { width: 36px; } .w40 { width: 40px; } .w46 { width: 46px; } .w67 { width: 67px; }
.w-paste { width: 54px; padding-left: 1px; }
.ic { width: 33px; height: 33px; fill: none; stroke-width: 1.2; }
.w { stroke: #d6d6d6; fill: none; } .wf { fill: #d6d6d6; } .g { stroke: #777; fill: none; }
.or { stroke: #f0b060; } .or2 { stroke: #8b672f; fill: none; } .or2.ff { fill: #8b672f; }
.bl { stroke: #4fa8ec; fill: #292929; } .bl2 { stroke: #2f6186; fill: none; } .gr { stroke: #7ad38a; stroke-width: 1.5; }
.dots { stroke: #d6d6d6; stroke-width: 2.500; stroke-dasharray: 2.500 2; }
.fx { fill: #8a8a8a; font: italic 17px "Liberation Serif", serif; }
.clipcol { display: flex; flex-direction: column; margin-left: -5px; }
.cliprow { height: 24.500px; display: flex; align-items: center; gap: 3px; letter-spacing: -.62px; font-size: 12px; word-spacing: 1px; }
.collapse { margin: 77px 0 0 155px; fill: none; stroke: #eee; stroke-width: 1.5; }

.main { height: 499px; flex: none; display: flex; }
.rail { width: 36px; display: flex; flex-direction: column; align-items: center; padding-top: 11px; gap: 21px; padding-right: 2px; }
.rail svg { fill: none; stroke: #ddd; overflow: visible; }
.rail text { fill: #fff; stroke: none; font: 600 6.500px "Open Sans", sans-serif; letter-spacing: -.3px; }
.center { width: 914px; display: flex; flex-direction: column; }
.work { height: 466px; display: flex; background: #fff; border-top: 1px solid #8a8a8a; }
.canvas { width: 883px; height: 465px; position: relative; overflow: hidden; background: linear-gradient(#eeecec, #fff 6px); }
.page { position: absolute; left: 33px; top: -12px; width: 817px; height: 471px; border: 2px dotted #555; }
.canvas h1 { position: absolute; margin: 0; left: 207px; top: 4px; font: 700 30px/34px "Liberation Serif", serif; color: #222; letter-spacing: .23px; }
.vis { position: absolute; font-family: "Open Sans", sans-serif; }
.v-donut { left: 72px; top: 62px; } .v-line { left: 554px; top: 64px; } .v-funnel { left: 314px; top: 259px; }
.vt { font: 11px Roboto, sans-serif; fill: #252423; }
.lead { stroke: #bbb; fill: none; }
.dl { font-size: 7.500px; fill: #777; } .lg { font-size: 8.300px; fill: #605e5c; } .ax { font-size: 7.500px; fill: #777; }
.yl, .xt { font-size: 6.800px; fill: #333; } .xl { font-size: 7.200px; fill: #666; }
.fl { font-size: 8.300px; fill: #605e5c; }
.byline { position: absolute; left: 698px; top: 368px; font: 700 16.500px/20px "Liberation Serif", serif; color: #222; letter-spacing: .26px; }
.filters { width: 31px; border-left: 1px solid #aaa; display: flex; flex-direction: column; align-items: center; padding-top: 14px; color: #222; }
.filters svg { fill: none; stroke: #333; stroke-width: 1.3; }
.filters .f-ic { margin: 19px 0 0 5px; stroke-width: 1; }
.filters span { writing-mode: vertical-rl; margin: 8px 0 0 2px; font-size: 14px; line-height: 16px; font-weight: 600; letter-spacing: .05px; }
.pagebar { height: 33px; background: #292929; display: flex; border-top: 1px solid #555; }
.views { width: 121px; display: flex; align-items: center; border-right: 1px solid #555; padding-left: 9px; }
.views svg { fill: none; stroke: #eee; stroke-width: 1.4; margin-top: -5px; }
.views .pb-desk { margin-top: 0; } .pb-desk + svg { margin-left: 23px; }
.pb-desk .uline { stroke: #2aac94; stroke-width: 3; }
.views .nav1, .views .nav2 { stroke: #bba5d5; stroke-width: 1; margin-top: 1px; }
.nav1 { margin-left: 20px; } .views .nav2 { margin-left: 14px; stroke: #e09aa5; }
.ptab { width: 72px; border-bottom: 4px solid #2aac94; text-align: center; font-weight: 700; line-height: 33px; height: 33px; letter-spacing: -.6px; }
.padd { width: 38px; height: 33px; background: #2aac94; display: flex; align-items: center; justify-content: center; padding-bottom: 3px; }
.padd path { stroke: #111; stroke-width: 2.200; }

.viz { width: 173px; border-left: 1px solid #555; border-right: 1px solid #777; border-top: 1px solid #333; display: flex; flex-direction: column; }
.vhead { height: 36px; display: flex; align-items: center; justify-content: space-between; padding: 0 9px 1px 8px; font-size: 14px; letter-spacing: -.25px; }
.vhead svg { fill: none; stroke: #fff; stroke-width: 1.8; }
.build { padding-left: 8px; height: 17px; line-height: 15px; font-size: 11.500px; font-weight: 700; letter-spacing: -.6px; word-spacing: 1px; }
.modes { display: flex; gap: 32px; padding-left: 8px; height: 33px; align-items: center; }
.mode { width: 30px; height: 30px; display: flex; align-items: center; justify-content: center; }
.mode:not(.on) { padding-left: 2px; }
.mode.on { background: #2f2f2f; border-radius: 3px; margin-top: -2px; }
.teal { fill: #2aac94; stroke: #cfeee8; stroke-dasharray: 1.500 1.500; }
.notch { margin-top: 2px; } .notch path { fill: none; stroke: #777; }
.gallery { display: grid; grid-template-columns: repeat(6, 26.600px); grid-auto-rows: 26.600px; place-items: center; margin: 5px 0 0 6px; }
.gallery svg { width: 18px; height: 18px; overflow: visible; }
.k { fill: none; stroke: #d0d0d0; stroke-width: 1.2; } .b { fill: #0c64b0; stroke: #58a9e8; stroke-width: .8; } .gf { fill: #666; } .bs { fill: none; stroke: #4aa3e8; stroke-width: 1.2; }
.gallery text { fill: #4aa3e8; font: 9.500px "Open Sans", sans-serif; letter-spacing: -.7px; }
.gallery .big { font-size: 15.500px; letter-spacing: 0; font-weight: 500; }
.bolt { fill: #f48a1b; stroke: #ffcb80; stroke-width: .6; }
.more { height: 27px; line-height: 16px; padding-left: 13px; font-size: 13px; font-weight: 700; }
.wells { border-top: 2px solid #aaa; padding: 8px 5px 0 4px; letter-spacing: -.45px; flex: 1; margin-top: 3px; }
.wlabel, .drill { padding-left: 7px; line-height: 16px; }
.well { margin-top: 4px; height: 27px; width: 162px; border: 1px dashed #777; line-height: 27px; padding-left: 9px; }
.drill { margin-top: 10px; font-weight: 700; letter-spacing: -.75px; word-spacing: 1px; }
.trow { margin-top: 6px; height: 18px; display: flex; justify-content: space-between; align-items: center; padding: 0 16px 0 7px; }
.trow.t2 { margin-top: 8px; }
.toggle { width: 30px; height: 15px; border: 1px solid #bbb; border-radius: 8px; display: flex; align-items: center; font-size: 8.500px; color: #bbb; padding: 0 3px; gap: 2px; letter-spacing: -.2px; }
.toggle em { width: 8px; height: 8px; border-radius: 50%; background: #bbb; }
.toggle.on { background: #2aac94; border-color: #2aac94; color: #143f37; } .toggle.on em { background: #222; }
.well.black { background: #000; margin-top: 8px; height: 25px; line-height: 25px; padding-left: 8px; letter-spacing: -.5px; }

.data { width: 167px; padding-top: 1px; }
.data .vhead { padding-right: 5px; }
.dsearch { margin: 6px 0 0 4px; width: 163px; height: 23px; background: #242424; border: 1px solid #666; border-bottom-color: #aaa; border-radius: 3px; display: flex; align-items: center; padding-left: 11px; gap: 6px; font-size: 13px; letter-spacing: -.35px; color: #999; }
.dsearch svg, .ditem svg { fill: none; stroke: #aaa; stroke-width: 1.2; }
.ditem { display: flex; align-items: center; margin-top: 12px; padding-left: 15px; letter-spacing: -.47px; line-height: 17px; }
.ditem svg { stroke: #eee; } .ditem .tbl { margin: 0 5px 0 6px; }

.status { height: 14px; flex: none; border-top: 1px solid #666; display: flex; overflow: hidden; align-items: flex-start; color: #ccc; letter-spacing: -.42px; line-height: 16px; padding-top: 4px; }
.status > * { flex: none; }
.pg { width: 910px; padding-left: 1px; }
.slider { margin-top: 2px; }
.pct { margin-left: 9px; width: 41px; }
.fit { fill: none; stroke: #ccc; margin-top: 1px; }
.upd { margin-left: 14px; }

.tip { position: absolute; left: 1008px; top: 75px; width: 278px; height: 24px; background: #2b2b2b; border: 1px solid #3d3d3d; line-height: 23px; padding-left: 11px; letter-spacing: -.57px; box-shadow: 0 3px 8px rgba(0,0,0,.45); }
.tip::before { content: ""; position: absolute; left: 233px; top: -5px; width: 9px; height: 9px; background: #2b2b2b; border: solid #3d3d3d; border-width: 1px 0 0 1px; transform: rotate(45deg); }
.closetip { position: absolute; left: 1252px; top: 52px; width: 40px; height: 22px; background: #fff; color: #333; line-height: 23px; padding-left: 6px; letter-spacing: -.45px; }
```
